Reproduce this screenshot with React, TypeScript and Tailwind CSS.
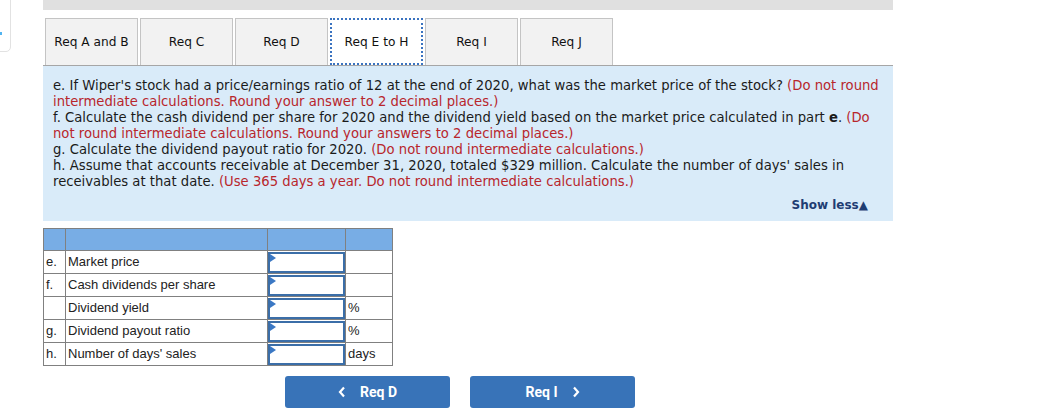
import React from "react";

const tabs = ["Req A and B", "Req C", "Req D", "Req E to H", "Req I", "Req J"];

const rows = [
  { l: "e.", t: "Market price", u: "" },
  { l: "f.", t: "Cash dividends per share", u: "" },
  { l: "", t: "Dividend yield", u: "%" },
  { l: "g.", t: "Dividend payout ratio", u: "%" },
  { l: "h.", t: "Number of days' sales", u: "days" },
];

function InputCell() {
  return (
    <div className="relative h-[21px] w-full border-2 border-[#3b6ea8] bg-white">
      <div className="absolute left-0 top-0 h-0 w-0 border-y-[4px] border-l-[6px] border-y-transparent border-l-[#3b78c4]" />
    </div>
  );
}

export default function App() {
  return (
    <div className="relative h-[417px] w-[1048px] overflow-hidden bg-white">
      <div className="absolute left-[-10px] top-[-10px] h-[62px] w-[21px] rounded-[5px] border border-[#e2e2e2]" />
      <div className="absolute left-0 top-[32px] h-[3px] w-[2px] bg-[#52b4f0]" />
      <div className="ml-[43px] w-[850px]">
        <div className="h-[10px] bg-[#e0e0e0]" />
        <div className="mt-[8px] flex gap-[2px] border-b border-[#a6a6a6] pl-[2px]" style={{ fontFamily: '"DejaVu Sans", Verdana, sans-serif' }}>
          {tabs.map((t, i) => (
            <div
              key={t}
              className={
                "flex h-[47px] w-[93px] items-center justify-center pt-[1px] text-[12.2px] text-[#111] " +
                (i === 3
                  ? "border-2 border-dotted border-[#3a73c0] bg-white"
                  : "border border-b-0 border-[#c4c4c4] bg-[#f2f2f2]")
              }
            >
              {t}
            </div>
          ))}
        </div>
        <div
          className="flex h-[155px] flex-col bg-[#d9ebf9] pl-[10px] pr-[10px] pt-[12px] text-[13.2px] leading-[16px] text-[#1b1b1b]"
          style={{ fontFamily: '"DejaVu Sans", Verdana, sans-serif' }}
        >
          <p>
            e. If Wiper's stock had a price/earnings ratio of 12 at the end of 2020, what was the market price of the stock?{" "}
            <span className="text-[#b8262c]">(Do not round intermediate calculations. Round your answer to 2 decimal places.)</span>
          </p>
          <p>
            f. Calculate the cash dividend per share for 2020 and the dividend yield based on the market price calculated in part{" "}
            <b>e</b>. <span className="text-[#b8262c]">(Do not round intermediate calculations. Round your answers to 2 decimal places.)</span>
          </p>
          <p>
            g. Calculate the dividend payout ratio for 2020.{" "}
            <span className="text-[#b8262c]">(Do not round intermediate calculations.)</span>
          </p>
          <p>
            h. Assume that accounts receivable at December 31, 2020, totaled $329 million. Calculate the number of days' sales in
            receivables at that date.{" "}
            <span className="text-[#b8262c]">(Use 365 days a year. Do not round intermediate calculations.)</span>
          </p>
          <div className="mt-auto flex justify-end pb-[8px] pr-[15px] text-[12px] font-bold text-[#1f3d73]">Show less▲</div>
        </div>
        <table
          className="mt-[7px] border-collapse text-[13px] text-[#222]"
          style={{ fontFamily: '"Liberation Sans", Arial, sans-serif' }}
        >
          <tbody>
            <tr className="h-[22px] bg-[#78ade5]">
              <td className="w-[22px] border border-[#808080]" />
              <td className="w-[202px] border border-[#808080]" />
              <td className="w-[78px] border border-[#808080]" />
              <td className="w-[47px] border border-[#808080]" />
            </tr>
            {rows.map((r) => (
              <tr key={r.t} className="h-[23px]">
                <td className="border border-[#808080] pl-[2px] align-middle">{r.l}</td>
                <td className="border border-[#808080] pl-[2px] align-middle">{r.t}</td>
                <td className="border border-[#808080] p-0 align-middle">
                  <InputCell />
                </td>
                <td className="border border-[#808080] pl-[2px] align-middle">{r.u}</td>
              </tr>
            ))}
          </tbody>
        </table>
      </div>
      <div className="mt-[10px] flex gap-[20px] pl-[285px]" style={{ fontFamily: 'Roboto, "Liberation Sans", sans-serif' }}>
        <button className="flex h-[32px] w-[165px] items-center justify-center gap-[14px] rounded-[3px] bg-[#3873b8] text-[14px] font-bold text-white">
          <svg width="8" height="12" viewBox="0 0 8 12"><path d="M6 1.5 2 6l4 4.5" stroke="white" strokeWidth="2.2" fill="none" /></svg>
          <span>Req D</span>
        </button>
        <button className="flex h-[32px] w-[165px] items-center justify-center gap-[14px] rounded-[3px] bg-[#3873b8] text-[14px] font-bold text-white">
          <span>Req I</span>
          <svg width="8" height="12" viewBox="0 0 8 12"><path d="M2 1.5 6 6l-4 4.5" stroke="white" strokeWidth="2.2" fill="none" /></svg>
        </button>
      </div>
    </div>
  );
}
